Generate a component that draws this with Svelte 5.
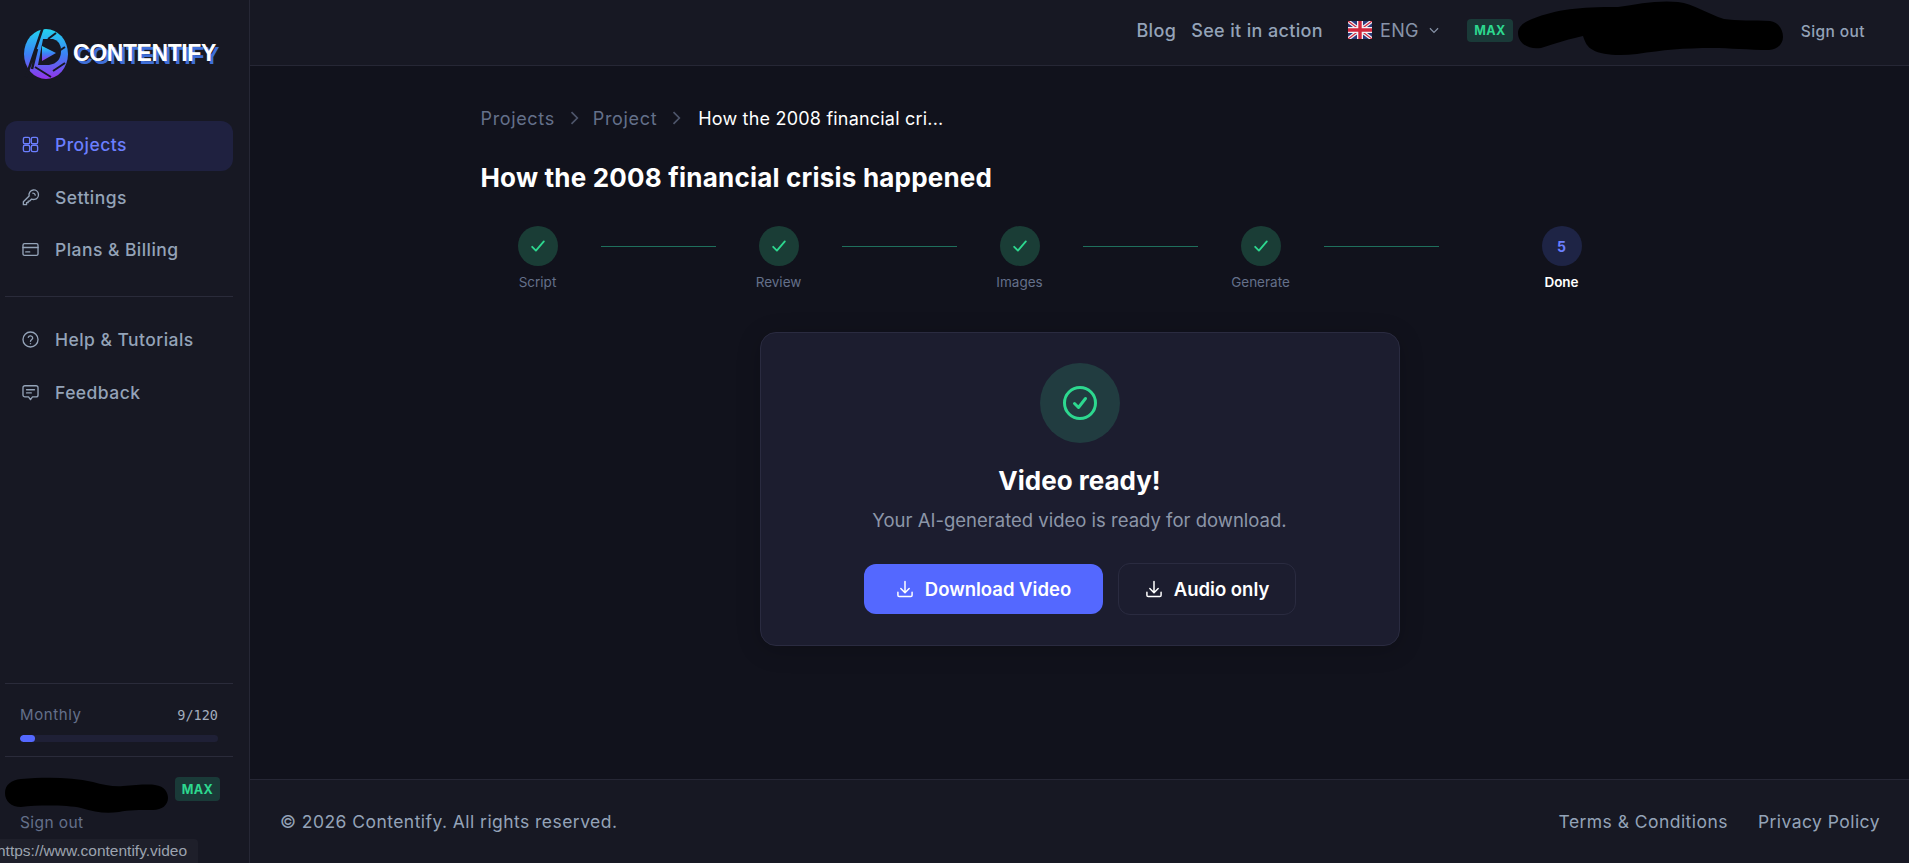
<script>
	const steps = [
		{ label: 'Script', done: true },
		{ label: 'Review', done: true },
		{ label: 'Images', done: true },
		{ label: 'Generate', done: true },
		{ label: 'Done', done: false, num: 5 }
	];
	const usedPct = (9 / 120) * 100;
</script>

<div class="app">
	<aside class="sidebar">
		<div class="brand">
			<svg class="brand-mark" width="46" height="54" viewBox="0 0 46 54" aria-hidden="true">
				<defs>
					<linearGradient id="lg" x1="0.5" y1="0" x2="0.5" y2="1">
						<stop offset="0" stop-color="#22d3ee" />
						<stop offset="0.5" stop-color="#3b82f6" />
						<stop offset="1" stop-color="#9333ea" />
					</linearGradient>
				</defs>
				<ellipse cx="23" cy="27" rx="22" ry="25" fill="url(#lg)" />
				<path d="M20 12 H30 Q38 14 38 24 Q38 36 26 38 H15 Z" fill="#171823" />
				<path d="M19 19 L33 26 L19 34 Z" fill="url(#lg)" />
				<path d="M20 0 L3 50 M14 22 L9 42" stroke="#171823" stroke-width="2.5" fill="none" />
				<path d="M33 6 L25 12 M12 40 L28 50 M30 44 L42 36 M42 20 L36 24" stroke="#171823" stroke-width="2" fill="none" />
			</svg>
			<span class="brand-name">CONTENTIFY</span>
		</div>

		<nav class="nav">
			<a class="nav-item active" href="#projects">
				<svg viewBox="0 0 24 24" class="ico"><rect x="3" y="3" width="8" height="8" rx="2" /><rect x="13" y="3" width="8" height="8" rx="2" /><rect x="3" y="13" width="8" height="8" rx="2" /><rect x="13" y="13" width="8" height="8" rx="2" /></svg>
				Projects
			</a>
			<a class="nav-item" href="#settings">
				<svg viewBox="0 0 24 24" class="ico"><path d="M15.5 2.5a6 6 0 0 1 1.5 11.9 6 6 0 0 1-3.6-.4L11 16.5H9v2H7v2.5H3v-3.6l7.3-7.3A6 6 0 0 1 15.5 2.5Z" /><path d="M15 6.5a3 3 0 0 1 3 2.5" /></svg>
				Settings
			</a>
			<a class="nav-item" href="#billing">
				<svg viewBox="0 0 24 24" class="ico"><rect x="2.5" y="4.5" width="19" height="15" rx="2" /><path d="M2.5 9.5h19M6 15h5" /></svg>
				Plans &amp; Billing
			</a>
			<div class="rule"></div>
			<a class="nav-item" href="#help">
				<svg viewBox="0 0 24 24" class="ico"><circle cx="12" cy="12" r="9.5" /><path d="M9.2 9.3a2.9 2.9 0 0 1 5.6.9c0 1.9-2.8 2.4-2.8 4" /><path d="M12 17.2v.1" /></svg>
				Help &amp; Tutorials
			</a>
			<a class="nav-item" href="#feedback">
				<svg viewBox="0 0 24 24" class="ico"><path d="M5 3.5h14a2.5 2.5 0 0 1 2.5 2.5v9a2.5 2.5 0 0 1-2.5 2.5h-4.5L12 21l-2.5-3.5H5A2.5 2.5 0 0 1 2.5 15V6A2.5 2.5 0 0 1 5 3.5Z" /><path d="M7 8.5h10M7 12.5h6" /></svg>
				Feedback
			</a>
		</nav>

		<div class="usage">
			<div class="usage-row">
				<span>Monthly</span>
				<span class="usage-count">9/120</span>
			</div>
			<div class="track"><div class="fill" style="width: {usedPct}%"></div></div>
		</div>

		<div class="account">
			<div class="account-top">
				<svg class="scribble" width="163" height="36" viewBox="0 0 163 36" aria-hidden="true">
					<path d="M16 2C40 0 66 0 88 5c10 3 22 5 30 4 12-1 26-2 32-1 10 1 13 8 13 13 0 7-6 12-15 12-14 0-24 0-34 2-14 2-24 0-38-4C62 28 34 28 16 30 6 30 0 24 0 16 0 8 6 3 16 2Z" fill="#000" />
				</svg>
				<span class="badge">MAX</span>
			</div>
			<a class="side-signout" href="#signout">Sign out</a>
		</div>
		<div class="status-tip">https://www.contentify.video</div>
	</aside>

	<div class="body">
		<header class="topbar">
			<a href="#blog">Blog</a>
			<a href="#demo" class="demo">See it in action</a>
			<div class="lang">
				<svg width="24" height="18" viewBox="0 0 24 18" aria-hidden="true">
					<rect width="24" height="18" rx="1.5" fill="#2b3a7a" />
					<path d="M0 0 24 18M24 0 0 18" stroke="#f1f1f5" stroke-width="3.6" />
					<path d="M0 0 24 18M24 0 0 18" stroke="#d0263c" stroke-width="1.2" />
					<path d="M12 0v18M0 9h24" stroke="#f1f1f5" stroke-width="6" />
					<path d="M12 0v18M0 9h24" stroke="#d0263c" stroke-width="3.4" />
				</svg>
				<span>ENG</span>
				<svg class="chev" width="14" height="14" viewBox="0 0 24 24"><path d="m5 9 7 7 7-7" /></svg>
			</div>
			<span class="badge top-badge">MAX</span>
			<svg class="scribble top-scribble" width="265" height="54" viewBox="0 0 265 54" aria-hidden="true">
				<path d="M14 18C40 8 60 6 100 6c20-3 40-7 60-5 16 2 30 12 46 17 12 2 30 1 46 2 8 1 13 8 13 16 0 7-6 13-14 13-20 0-40-2-56-2-30 0-50 2-76 6-18 2-36 1-44-4-6-3-8-8-10-14-10 2-30 8-42 12C10 49 0 42 0 32c0-6 6-11 14-14Z" fill="#000" />
			</svg>
			<a href="#signout" class="top-signout">Sign out</a>
		</header>

		<main class="content">
			<div class="wrap">
				<div class="crumbs">
					<a href="#projects">Projects</a>
					<svg class="sep" width="20" height="20" viewBox="0 0 24 24"><path d="m9 5 7 7-7 7" /></svg>
					<a href="#project">Project</a>
					<svg class="sep" width="20" height="20" viewBox="0 0 24 24"><path d="m9 5 7 7-7 7" /></svg>
					<span class="current">How the 2008 financial cri...</span>
				</div>
				<h1>How the 2008 financial crisis happened</h1>

				<ol class="stepper">
					{#each steps as step, i}
						<li class="step" class:last={!step.done}>
							<div class="dot" class:pending={!step.done}>
								{#if step.done}
									<svg width="20" height="20" viewBox="0 0 24 24"><path d="m5 13 4.5 4.5L19 6.5" /></svg>
								{:else}
									{step.num}
								{/if}
							</div>
							<span class="step-label">{step.label}</span>
						</li>
						{#if i < steps.length - 1}
							<li class="line"></li>
						{/if}
					{/each}
				</ol>

				<section class="card">
					<div class="ok">
						<svg width="36" height="36" viewBox="0 0 36 36"><circle cx="18" cy="18" r="15.5" /><path d="m12.5 18.5 4 4 7-9" /></svg>
					</div>
					<h2>Video ready!</h2>
					<p>Your AI-generated video is ready for download.</p>
					<div class="actions">
						<button class="btn primary">
							<svg width="20" height="20" viewBox="0 0 24 24"><path d="M12 3v13M7 11.5l5 5 5-5M3.5 16v3.5a1.5 1.5 0 0 0 1.5 1.5h14a1.5 1.5 0 0 0 1.5-1.5V16" /></svg>
							Download Video
						</button>
						<button class="btn ghost">
							<svg width="20" height="20" viewBox="0 0 24 24"><path d="M12 3v13M7 11.5l5 5 5-5M3.5 16v3.5a1.5 1.5 0 0 0 1.5 1.5h14a1.5 1.5 0 0 0 1.5-1.5V16" /></svg>
							Audio only
						</button>
					</div>
				</section>
			</div>
		</main>

		<footer class="footer">
			<span>© 2026 Contentify. All rights reserved.</span>
			<div class="legal">
				<a href="#terms">Terms &amp; Conditions</a>
				<a href="#privacy">Privacy Policy</a>
			</div>
		</footer>
	</div>
</div>

<style>
	:global(body) {
		margin: 0;
		background: #11121c;
		font-family: Inter, 'Noto Sans', sans-serif;
		overflow: hidden;
	}
	a {
		color: inherit;
		text-decoration: none;
	}
	svg {
		display: block;
		flex-shrink: 0;
	}
	.app {
		display: flex;
		height: 100vh;
	}

	/* sidebar */
	.sidebar {
		position: relative;
		width: 249px;
		flex-shrink: 0;
		display: flex;
		flex-direction: column;
		background: #171823;
		border-right: 1px solid #262735;
		box-sizing: content-box;
	}
	.brand {
		display: flex;
		align-items: center;
		gap: 4px;
		height: 121px;
		padding: 0 0 13px 23px;
		box-sizing: border-box;
	}
	.brand-name {
		font-family: 'Liberation Sans', sans-serif;
		font-weight: 700;
		font-size: 23px;
		letter-spacing: -0.4px;
		color: #fff;
		text-shadow: 3px 3px 0 #3f6fd8;
		margin-top: -2px;
	}
	.nav {
		display: flex;
		flex-direction: column;
		padding: 0 16px 0 5px;
		gap: 2.5px;
		flex: 1;
	}
	.nav-item {
		display: flex;
		align-items: center;
		gap: 15px;
		height: 50px;
		padding-left: 16px;
		padding-bottom: 3px;
		box-sizing: border-box;
		border-radius: 12px;
		font-size: 17.5px;
		font-weight: 500;
		letter-spacing: 0.45px;
		color: #94a3b8;
	}
	.nav-item.active {
		background: #1f2140;
		color: #6b7fff;
	}
	.ico {
		width: 19px;
		height: 19px;
		fill: none;
		stroke: currentColor;
		stroke-width: 1.7;
		stroke-linecap: round;
		stroke-linejoin: round;
	}
	.rule {
		height: 1px;
		background: #2a2b3a;
		margin: 17px 0;
	}
	.usage {
		margin: 0 16px 0 5px;
		padding: 21px 15px 14px;
		border-top: 1px solid #2a2b3a;
		border-bottom: 1px solid #2a2b3a;
	}
	.usage-row {
		display: flex;
		justify-content: space-between;
		align-items: center;
		font-size: 15px;
		letter-spacing: 0.6px;
		color: #64708a;
		margin-bottom: 11px;
	}
	.usage-count {
		font-family: 'DejaVu Sans Mono', monospace;
		font-size: 13.5px;
		letter-spacing: 0;
		color: #a3adbd;
	}
	.track {
		height: 7px;
		border-radius: 4px;
		background: #1f2036;
		overflow: hidden;
	}
	.fill {
		height: 100%;
		border-radius: 4px;
		background: #5468ff;
	}
	.account {
		padding: 20px 30px 31px 5px;
	}
	.account-top {
		display: flex;
		align-items: flex-start;
		gap: 7px;
	}
	.side-signout {
		display: block;
		margin: 0 0 0 15px;
		font-size: 15.5px;
		letter-spacing: 0.4px;
		color: #64708a;
	}
	.badge {
		display: inline-flex;
		align-items: center;
		justify-content: center;
		width: 45px;
		height: 24px;
		border-radius: 4px;
		background: #1a3a38;
		color: #2dd88f;
		font-size: 12.5px;
		font-weight: 700;
		letter-spacing: 0.4px;
		flex-shrink: 0;
	}
	.status-tip {
		position: absolute;
		left: 0;
		bottom: 0;
		width: 198px;
		height: 24px;
		box-sizing: border-box;
		background: #1e1f2a;
		border-top-right-radius: 4px;
		color: #9ca3af;
		font-family: 'Liberation Sans', sans-serif;
		font-size: 15.5px;
		line-height: 24px;
		white-space: nowrap;
		overflow: hidden;
		text-indent: -3px;
	}

	/* top bar */
	.body {
		flex: 1;
		min-width: 0;
		display: flex;
		flex-direction: column;
	}
	.topbar {
		height: 65px;
		flex-shrink: 0;
		box-sizing: content-box;
		display: flex;
		align-items: center;
		justify-content: flex-end;
		padding-right: 44px;
		background: #171823;
		border-bottom: 1px solid #262735;
		color: #94a3b8;
		font-size: 18px;
		font-weight: 500;
		letter-spacing: 0.35px;
	}
	.topbar > a {
		margin-bottom: 5px;
	}
	.demo {
		margin-left: 15px;
	}
	.lang {
		display: flex;
		align-items: center;
		margin: 0 0 5px 25px;
		gap: 8px;
		color: #8793a8;
		font-weight: 400;
	}
	.chev {
		fill: none;
		stroke: #8793a8;
		stroke-width: 2;
	}
	.top-badge {
		margin-left: 26px;
		height: 23px;
		width: 46px;
		margin-top: -5px;
	}
	.top-scribble {
		margin: -9px 18px 0 5px;
	}
	.topbar > .top-signout {
		font-size: 15.5px;
		letter-spacing: 0.4px;
		margin-bottom: 3px;
	}

	/* main */
	.content {
		flex: 1;
		min-height: 0;
		background: #11121c;
	}
	.wrap {
		width: 1200px;
		margin: 0 auto;
		padding-top: 40px;
	}
	.crumbs {
		display: flex;
		align-items: center;
		gap: 9px;
		height: 24px;
		padding-left: 1px;
		font-size: 18px;
		letter-spacing: 0.3px;
		color: #64708a;
	}
	.crumbs a {
		letter-spacing: 0.65px;
	}
	.current {
		color: #fff;
		margin-left: 3px;
		letter-spacing: 0.2px;
	}
	.sep {
		fill: none;
		stroke: #4e566b;
		stroke-width: 2;
	}
	h1 {
		margin: 32px 0 0 1px;
		font-size: 26px;
		line-height: 32px;
		font-weight: 700;
		color: #fff;
		letter-spacing: 0.2px;
	}
	.stepper {
		list-style: none;
		margin: 32px 0 0;
		padding: 0;
		display: flex;
		align-items: flex-start;
	}
	.step {
		width: 116px;
		display: flex;
		flex-direction: column;
		align-items: center;
		gap: 8px;
	}
	.step.last {
		margin-left: 60px;
	}
	.line {
		width: 115px;
		height: 1px;
		margin: 20px 5px 0;
		background: #1f6f5c;
	}
	.dot {
		width: 40px;
		height: 40px;
		border-radius: 50%;
		background: #1a3d36;
		display: flex;
		align-items: center;
		justify-content: center;
	}
	.dot svg {
		fill: none;
		stroke: #2dd88f;
		stroke-width: 2.2;
		stroke-linecap: round;
		stroke-linejoin: round;
	}
	.dot.pending {
		background: #1e2445;
		color: #6b7fff;
		font-size: 14px;
		font-weight: 700;
	}
	.step-label {
		font-size: 13.5px;
		line-height: 16px;
		color: #64708a;
	}
	.last .step-label {
		color: #fff;
		font-weight: 600;
	}

	/* card */
	.card {
		width: 640px;
		height: 314px;
		box-sizing: border-box;
		margin: 42px auto 0;
		padding-top: 30px;
		display: flex;
		flex-direction: column;
		align-items: center;
		background: #1c1d2f;
		border: 1px solid #2a2b40;
		border-radius: 16px;
		box-shadow: 0 4px 24px rgba(0, 0, 0, 0.2);
	}
	.ok {
		width: 80px;
		height: 80px;
		border-radius: 50%;
		background: #213c40;
		display: flex;
		align-items: center;
		justify-content: center;
	}
	.ok svg {
		fill: none;
		stroke: #2dd88f;
		stroke-width: 3;
		stroke-linecap: round;
		stroke-linejoin: round;
	}
	h2 {
		margin: 23px 0 0;
		font-size: 26px;
		line-height: 30px;
		font-weight: 700;
		color: #fff;
	}
	p {
		margin: 13px 0 0;
		font-size: 18.5px;
		line-height: 22px;
		color: #8c96a8;
	}
	.actions {
		display: flex;
		align-items: center;
		gap: 15px;
		margin-top: 32px;
	}
	.btn {
		display: flex;
		align-items: center;
		justify-content: center;
		gap: 10px;
		border-radius: 12px;
		font-family: inherit;
		font-size: 18.5px;
		font-weight: 600;
		color: #fff;
	}
	.btn svg {
		fill: none;
		stroke: currentColor;
		stroke-width: 1.8;
		stroke-linecap: round;
		stroke-linejoin: round;
	}
	.primary {
		width: 239px;
		height: 50px;
		background: #5468ff;
		border: none;
	}
	.ghost {
		width: 178px;
		height: 52px;
		background: transparent;
		border: 1px solid #2a2b40;
	}

	/* footer */
	.footer {
		height: 84px;
		flex-shrink: 0;
		box-sizing: border-box;
		display: flex;
		align-items: center;
		justify-content: space-between;
		padding: 0 29px 0 30px;
		background: #171823;
		border-top: 1px solid #262735;
		color: #94a3b8;
		font-size: 17.5px;
		letter-spacing: 0.45px;
	}
	.legal {
		display: flex;
		gap: 30px;
	}
</style>
